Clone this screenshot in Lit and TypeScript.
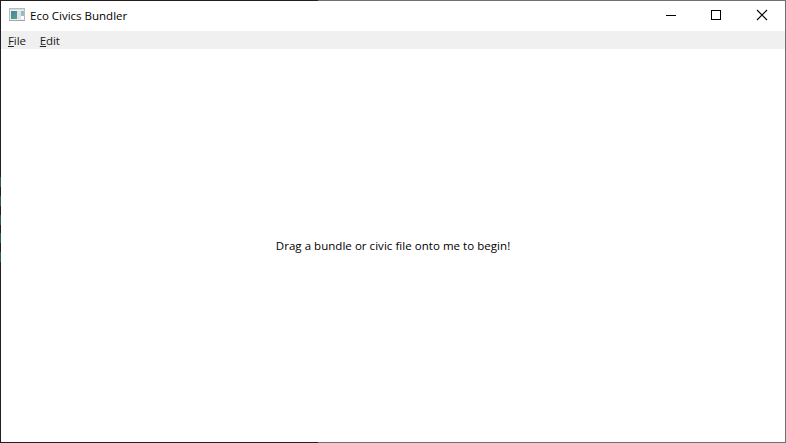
import { LitElement, html, css } from "lit";
import { customElement } from "lit/decorators.js";

@customElement("app-root")
export class AppRoot extends LitElement {
  static styles = css`
    :host {
      display: block;
      height: 100vh;
      font: 11.5px/16px "Open Sans", "Noto Sans", sans-serif;
      letter-spacing: 0.04px;
      color: #000;
    }
    .window {
      box-sizing: border-box;
      height: 100%;
      display: grid;
      grid-template: 1px 30px 18px 1fr 1px / 1px 1fr 1px;
      background: #fff;
    }
    .edge {
      grid-column: 1 / -1;
      background: linear-gradient(90deg, #231f20 318px, #707070 318px);
    }
    .left {
      grid-area: 2 / 1 / 5 / 2;
      background:
        linear-gradient(#231f20 176px, transparent 176px, transparent 261px, #231f20 261px),
        repeating-linear-gradient(#2e6049 0 10px, #231f20 10px 18.8px) 0 176px;
    }
    .right {
      grid-area: 2 / 3 / 5 / 4;
      background: #707070;
    }
    .titlebar {
      grid-area: 2 / 2;
      display: flex;
      align-items: center;
    }
    .app-icon {
      margin: 0 5px 2px 8px;
    }
    .title {
      flex: 1;
      letter-spacing: 0;
    }
    .caption-buttons {
      display: flex;
      height: 30px;
    }
    .menu {
      grid-area: 3 / 2;
      display: flex;
      align-items: center;
      gap: 14px;
      padding: 2px 7px 0;
      background: #f0f0f0;
      color: #212121;
      letter-spacing: -0.1px;
      box-sizing: border-box;
    }
    .key {
      text-decoration: underline;
      text-underline-offset: 1px;
      text-decoration-thickness: 1px;
    }
    .drop {
      grid-area: 4 / 2;
      display: flex;
      align-items: center;
      justify-content: center;
      white-space: nowrap;
    }
    svg {
      display: block;
    }
  `;

  render() {
    return html`
      <div class="window">
        <div class="edge"></div>
        <div class="left"></div>
        <header class="titlebar">
          <svg class="app-icon" width="16" height="14" viewBox="0 0 16 14">
            <defs>
              <linearGradient id="pane" x1="0" y1="0" x2="1" y2="1">
                <stop offset="0" stop-color="#4a7fae" />
                <stop offset="1" stop-color="#51a878" />
              </linearGradient>
            </defs>
            <rect x=".5" y=".5" width="15" height="12" fill="#eceef0" stroke="#b7bbc0" />
            <rect x="1" y="1" width="14" height="1" fill="#d8dde2" />
            <rect x="2" y="3" width="6" height="8" fill="url(#pane)" />
            <rect x="8" y="3" width="4" height="8" fill="#e2e2e8" />
            <rect x="12" y="3" width="3" height="5" fill="url(#pane)" opacity=".55" />
            <rect x="12" y="8" width="3" height="3" fill="#fff" />
            <rect x="0" y="12" width="16" height="1" fill="#a6a6a6" />
          </svg>
          <span class="title">Eco Civics Bundler</span>
          <div class="caption-buttons">
            <svg width="46" height="30" shape-rendering="crispEdges">
              <path d="M18 14.5h10" stroke="#000" />
            </svg>
            <svg width="46" height="30" shape-rendering="crispEdges">
              <rect x="17.5" y="9.5" width="9" height="9" fill="none" stroke="#000" />
            </svg>
            <svg width="45" height="30">
              <path d="M17 9l10 10M27 9l-10 10" fill="none" stroke="#000" stroke-width="1.1" />
            </svg>
          </div>
        </header>
        <nav class="menu">
          <span><span class="key">F</span>ile</span>
          <span><span class="key">E</span>dit</span>
        </nav>
        <main class="drop">Drag a bundle or civic file onto me to begin!</main>
        <div class="right"></div>
        <div class="edge"></div>
      </div>
    `;
  }
}
